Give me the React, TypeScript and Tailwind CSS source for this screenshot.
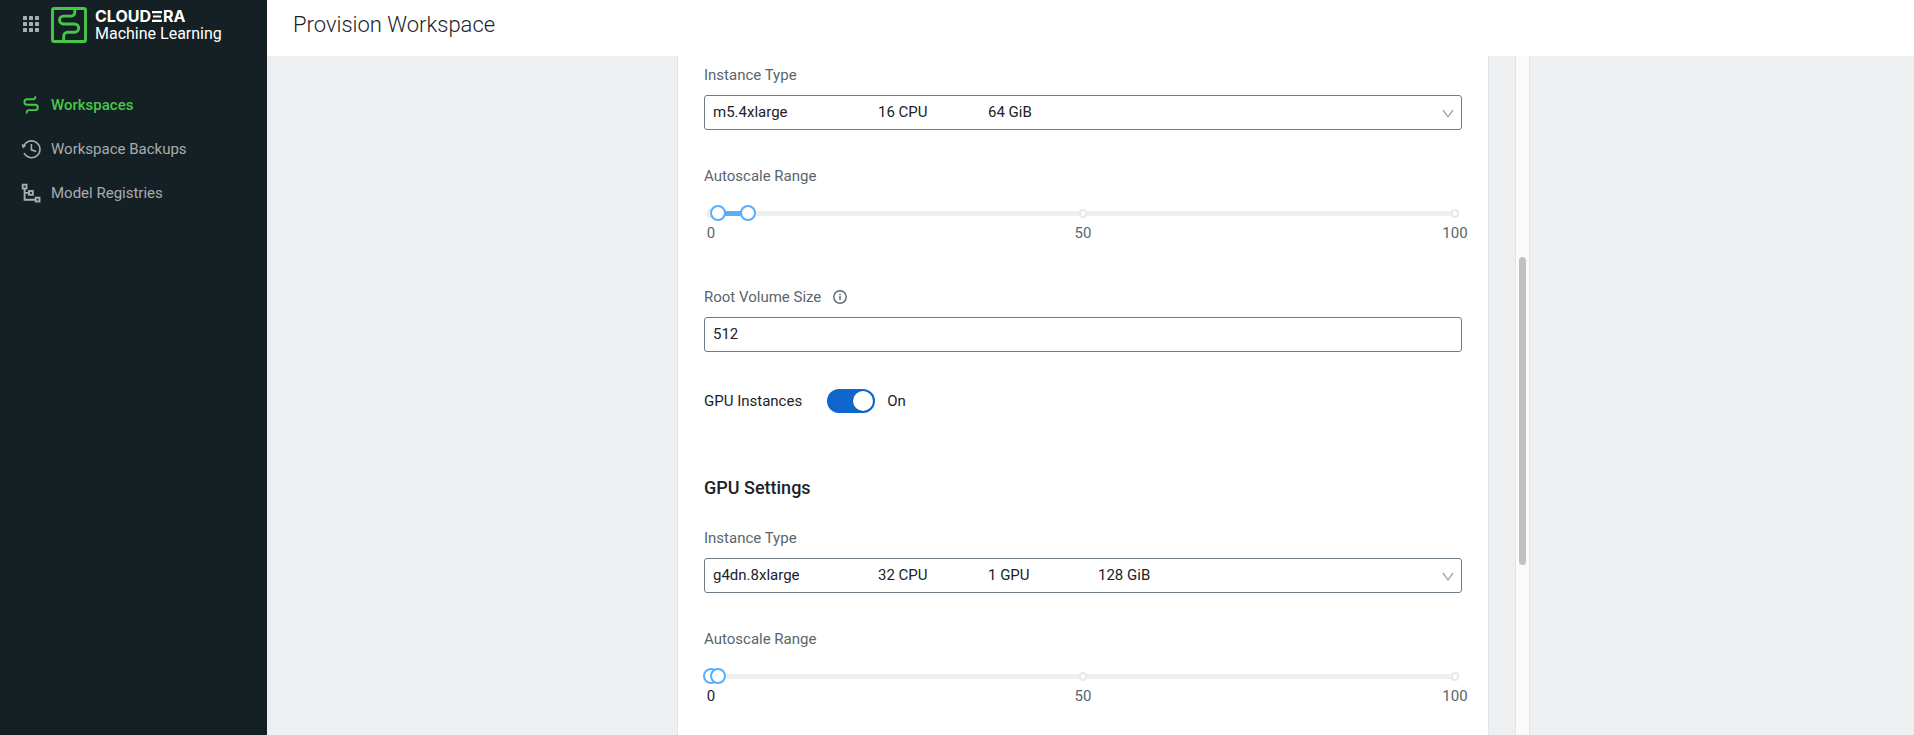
import { useState } from "react";
import type { ReactNode } from "react";

function AppGridIcon() {
  return (
    <svg viewBox="0 0 16 16" className="size-4" fill="#a9adb0" aria-hidden="true">
      {[0, 6, 12].map((y) => [0, 6, 12].map((x) => <rect key={`${x}-${y}`} x={x} y={y} width="4" height="4" rx="0.6" />))}
    </svg>
  );
}

function LogoMark() {
  return (
    <svg viewBox="0 0 36 36" className="size-9" fill="none" stroke="#47c747" aria-hidden="true">
      <rect x="1.5" y="1.5" width="33" height="33" rx="1.6" strokeWidth="2.9" />
      <path d="M23.8 2v3.4a3.7 3.7 0 0 1-3.7 3.7h-7.7a3.95 3.95 0 0 0 0 7.9h11.2a4.1 4.1 0 0 1 0 8.2h-7a3.9 3.9 0 0 0-3.9 3.9V34" strokeWidth="2.9" />
    </svg>
  );
}

function BarredE() {
  return (
    <svg viewBox="0 0 10 11" className="mx-px h-[11px] w-[10px]" stroke="#fff" strokeWidth="2.2" aria-hidden="true">
      <path d="M0 1.1h10M1 5.5h8M0 9.9h10" />
    </svg>
  );
}

function WorkspacesIcon() {
  return (
    <svg viewBox="0 0 20 20" className="size-5" fill="none" stroke="#47c747" strokeWidth="1.9" strokeLinecap="round" aria-hidden="true">
      <path d="M14.3 2v.2a2.1 2.1 0 0 1-2.1 2.1H6.1a2.7 2.7 0 0 0 0 5.4h8a2.7 2.7 0 0 1 0 5.4H8a2.3 2.3 0 0 0-2.3 2.3v.4" />
    </svg>
  );
}

function HistoryIcon() {
  return (
    <svg viewBox="0 0 20 20" className="size-5" fill="none" stroke="#a9adb0" strokeWidth="1.6" aria-hidden="true">
      <path d="M2.6 7.6A8.4 8.4 0 1 1 3 14" />
      <path d="M10.4 5v5.8l4.8 1.6" />
      <path d="M.6 5l4.6 1.8-3.4 2.8z" fill="#a9adb0" stroke="none" />
    </svg>
  );
}

function RegistryIcon() {
  return (
    <svg viewBox="0 0 20 20" className="size-5" fill="none" stroke="#a9adb0" strokeWidth="1.9" aria-hidden="true">
      <rect x="1.7" y="1.7" width="3.8" height="3.8" />
      <rect x="8" y="8" width="3.8" height="3.8" />
      <rect x="14.7" y="14.7" width="3.8" height="3.8" />
      <path d="M3.6 5.5v11.2h11.1M3.6 9.9H8" />
    </svg>
  );
}

function InfoIcon() {
  return (
    <svg viewBox="0 0 14 14" className="size-[14px]" fill="none" stroke="#5a656d" strokeWidth="1.4" aria-hidden="true">
      <circle cx="7" cy="7" r="6.2" />
      <path d="M7 6v4M7 3.8v1.4" />
    </svg>
  );
}

function NavItem({ icon, label, active = false }: { icon: ReactNode; label: string; active?: boolean }) {
  return (
    <li>
      <a
        href="#"
        aria-current={active ? "page" : undefined}
        className={`flex h-11 items-center gap-[10px] pl-[21px] ${active ? "font-medium text-[#47c747]" : "text-[#a9adb0]"}`}
      >
        {icon}
        {label}
      </a>
    </li>
  );
}

function InstanceSelect({ id, name, specs }: { id: string; name: string; specs: string[] }) {
  return (
    <div className="mb-[35px]">
      <label htmlFor={id} className="mb-[9px] block text-[#5a656d]">
        Instance Type
      </label>
      <div className="relative">
        <select id={id} className="block h-[35px] w-full appearance-none rounded-[3px] border border-[#707c85] bg-white px-2 text-transparent">
          <option>{[name, ...specs].join(" ")}</option>
        </select>
        <div className="pointer-events-none absolute inset-0 flex items-center pr-2 pb-px pl-[9px]" aria-hidden="true">
          <span className="w-[165px]">{name}</span>
          {specs.map((spec) => (
            <span key={spec} className="w-[110px]">
              {spec}
            </span>
          ))}
          <svg viewBox="0 0 12 10" className="mt-1 ml-auto h-[10px] w-3" fill="none" stroke="#a3a8ac" strokeWidth="1.3">
            <path d="M1 1l5 7L11 1" />
          </svg>
        </div>
      </div>
    </div>
  );
}

const thumb =
  "pointer-events-none absolute inset-x-0 top-0 h-4 w-full appearance-none bg-transparent [&::-webkit-slider-thumb]:pointer-events-auto [&::-webkit-slider-thumb]:size-4 [&::-webkit-slider-thumb]:appearance-none [&::-webkit-slider-thumb]:rounded-full [&::-webkit-slider-thumb]:border-2 [&::-webkit-slider-thumb]:border-[#57aeff] [&::-webkit-slider-thumb]:bg-white";

function RangeSlider({ initial }: { initial: [number, number] }) {
  const [low, setLow] = useState(initial[0]);
  const [high, setHigh] = useState(initial[1]);
  return (
    <fieldset className="-mx-px">
      <legend className="ml-px text-[#5a656d]">Autoscale Range</legend>
      <div className="relative mt-[18px] h-4">
        <div className="absolute inset-x-2 top-[6px] h-[5px] rounded-sm bg-[#eeeff0]">
          <div className="absolute h-full bg-[#57aeff]" style={{ left: `${low}%`, width: `${high - low}%` }} />
          {[0, 50, 100].map((mark) => (
            <span
              key={mark}
              className="absolute -top-[2px] h-[9px] w-2 -translate-x-1/2 rounded-full border-2 border-[#e6e8e9] bg-white"
              style={{ left: `${mark}%` }}
            />
          ))}
        </div>
        <input type="range" aria-label="Minimum instances" min={0} max={100} value={low} onChange={(e) => setLow(Math.min(+e.target.value, high))} className={thumb} />
        <input type="range" aria-label="Maximum instances" min={0} max={100} value={high} onChange={(e) => setHigh(Math.max(+e.target.value, low))} className={thumb} />
      </div>
      <div className="mx-2 mt-px flex justify-between text-[#5a656d]">
        {[0, 50, 100].map((mark) => (
          <span key={mark} className={`flex w-0 justify-center ${mark >= low && mark <= high ? "text-[#1b2329]" : ""}`}>
            {mark}
          </span>
        ))}
      </div>
    </fieldset>
  );
}

export default function App() {
  const [gpu, setGpu] = useState(true);
  return (
    <div className="flex h-screen overflow-hidden bg-[#eeeff1] font-[Roboto,sans-serif] text-[15px] leading-[22px] text-[#1b2329]">
      <aside className="w-[267px] shrink-0 bg-[#152025]">
        <div className="flex items-center pt-[7px] pl-[23px]">
          <button type="button" aria-label="Applications" className="pb-0.5">
            <AppGridIcon />
          </button>
          <div className="ml-3 flex items-center gap-2 text-white">
            <LogoMark />
            <div>
              <div className="flex items-center font-[Inter,sans-serif] text-[16px] leading-[17px] font-bold">
                CLOUD
                <BarredE />
                RA
              </div>
              <div className="text-[16px] leading-[18px]">Machine Learning</div>
            </div>
          </div>
        </div>
        <nav className="mt-10">
          <ul>
            <NavItem icon={<WorkspacesIcon />} label="Workspaces" active />
            <NavItem icon={<HistoryIcon />} label="Workspace Backups" />
            <NavItem icon={<RegistryIcon />} label="Model Registries" />
          </ul>
        </nav>
      </aside>

      <div className="flex min-w-0 grow flex-col">
        <header className="h-14 shrink-0 bg-white px-[26px] pt-[11px]">
          <h1 className="text-[22px] leading-7 font-light">Provision Workspace</h1>
        </header>

        <main className="mx-auto flex min-h-0 w-full max-w-[879px] grow">
          <div className="grow overflow-hidden px-[26px]">
            <form className="min-h-full border-x border-[#e2e4e6] bg-white px-[26px] pt-2">
              <InstanceSelect id="cpu-instance" name="m5.4xlarge" specs={["16 CPU", "64 GiB"]} />
              <RangeSlider initial={[1, 5]} />

              <div className="mt-[42px] mb-[9px] flex items-center gap-3 text-[#5a656d]">
                <label htmlFor="root-volume">Root Volume Size</label>
                <InfoIcon />
              </div>
              <input id="root-volume" type="text" defaultValue="512" className="block h-[35px] w-full rounded-[3px] border border-[#707c85] bg-white px-2 pb-0.5" />

              <div className="mt-[37px] flex items-center">
                <label htmlFor="gpu-toggle">GPU Instances</label>
                <button
                  id="gpu-toggle"
                  type="button"
                  role="switch"
                  aria-checked={gpu}
                  onClick={() => setGpu(!gpu)}
                  className={`ml-[25px] flex h-6 w-12 items-center rounded-full p-[2px] ${gpu ? "justify-end bg-[#1066cc]" : "justify-start bg-gray-400"}`}
                >
                  <span className="size-5 rounded-full bg-white shadow" />
                </button>
                <span className="ml-3">{gpu ? "On" : "Off"}</span>
              </div>

              <h2 className="mt-16 mb-7 text-[18px] leading-[22px] font-medium">GPU Settings</h2>
              <InstanceSelect id="gpu-instance" name="g4dn.8xlarge" specs={["32 CPU", "1 GPU", "128 GiB"]} />
              <RangeSlider initial={[0, 1]} />
            </form>
          </div>
          <div className="w-[15px] shrink-0 border-x border-[#e2e4e6] bg-[#fafafa] px-[3px] pt-[201px]">
            <div className="h-[308px] rounded-full bg-[#c1c1c1]" />
          </div>
        </main>
      </div>
    </div>
  );
}
